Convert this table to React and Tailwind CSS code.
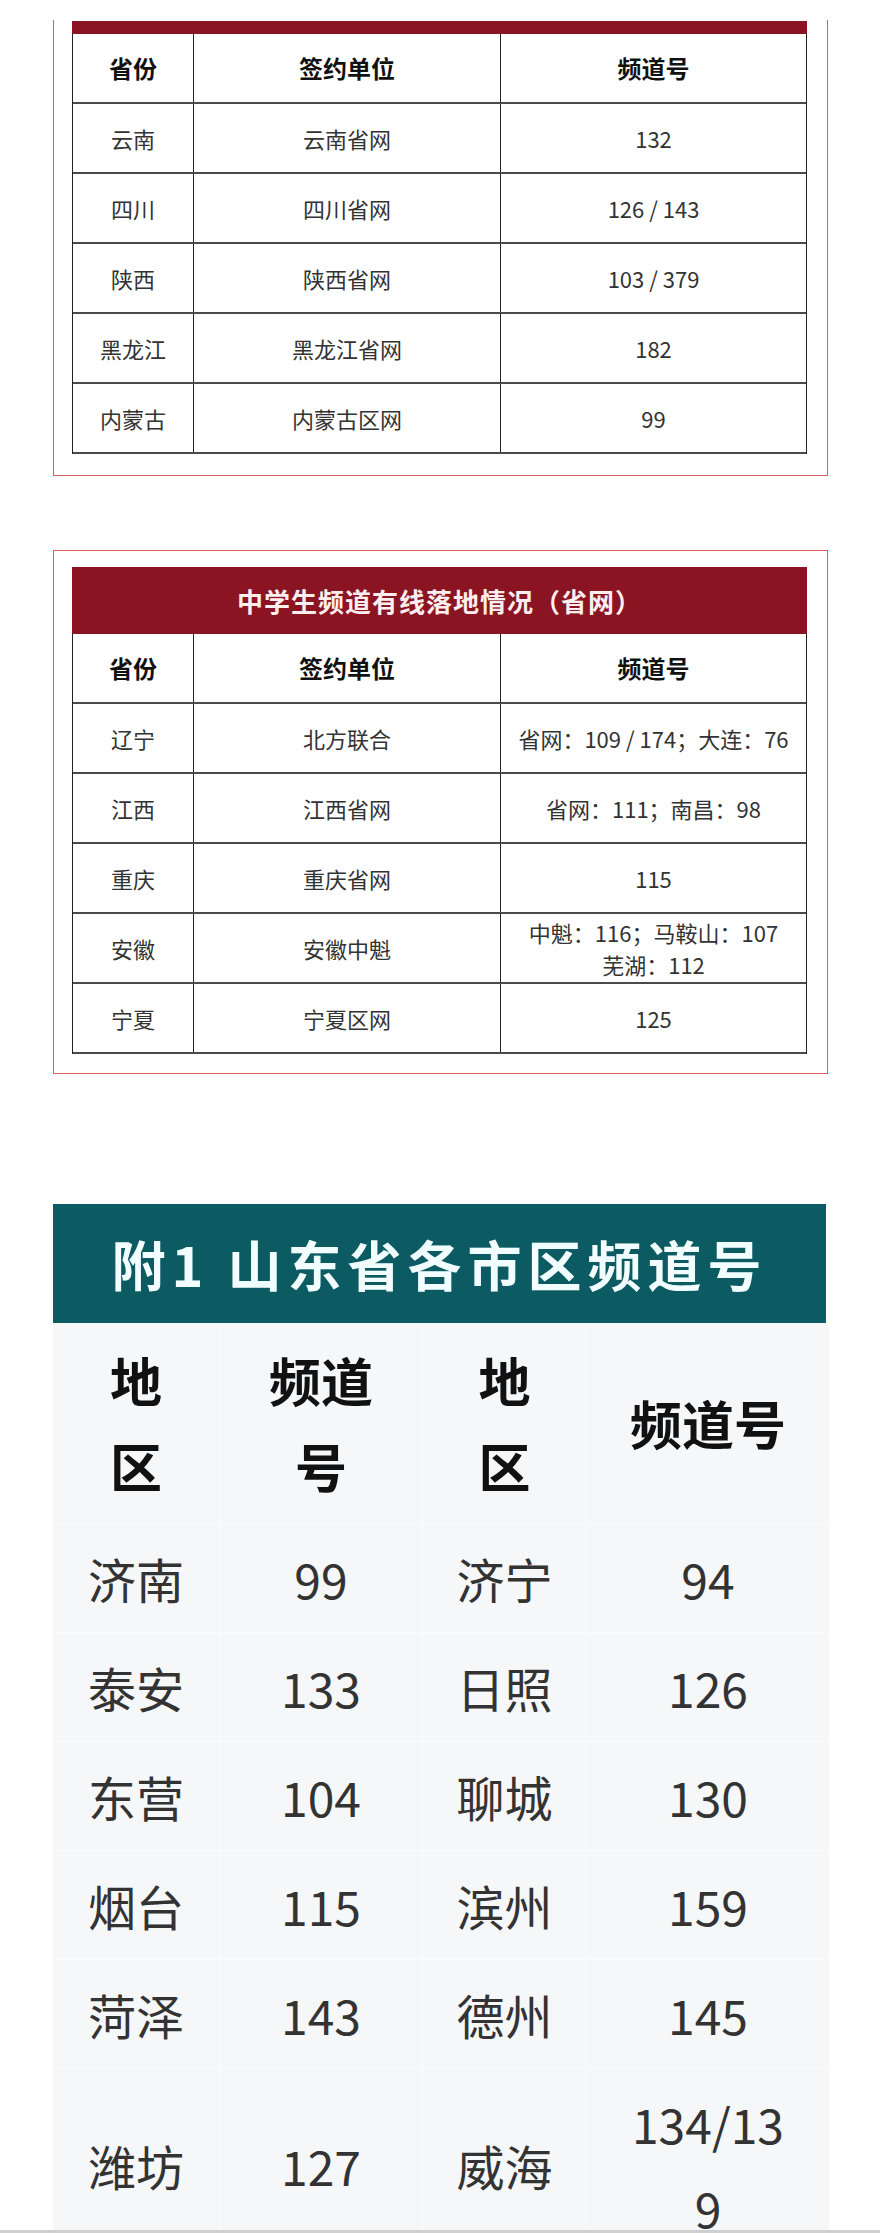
const provinces = [
  ["云南", "云南省网", "132"],
  ["四川", "四川省网", "126 / 143"],
  ["陕西", "陕西省网", "103 / 379"],
  ["黑龙江", "黑龙江省网", "182"],
  ["内蒙古", "内蒙古区网", "99"],
]

const middleSchool = [
  ["辽宁", "北方联合", ["省网：109 / 174；大连：76"]],
  ["江西", "江西省网", ["省网：111；南昌：98"]],
  ["重庆", "重庆省网", ["115"]],
  ["安徽", "安徽中魁", ["中魁：116；马鞍山：107", "芜湖：112"]],
  ["宁夏", "宁夏区网", ["125"]],
]

const shandong = [
  ["济南", "99", "济宁", "94"],
  ["泰安", "133", "日照", "126"],
  ["东营", "104", "聊城", "130"],
  ["烟台", "115", "滨州", "159"],
  ["菏泽", "143", "德州", "145"],
  ["潍坊", "127", "威海", "134/139"],
]

function Row({ cells, head }) {
  return (
    <div className="grid grid-cols-[121px_307px_1fr] h-[70px] border-b-2 border-[#4a4a4a]">
      {cells.map((c, i) => (
        <div
          key={i}
          className={`flex flex-col items-center justify-center text-center leading-[32px] ${i < 2 ? "border-r border-[#222]" : ""} ${head ? "text-[24px] font-bold text-[#111]" : "text-[22px] text-[#333]"}`}
        >
          {Array.isArray(c) ? c.map((l) => <span key={l}>{l}</span>) : c}
        </div>
      ))}
    </div>
  )
}

function ChannelTable({ rows }) {
  return (
    <div className="w-[735px] border-x border-[#222]">
      <Row head cells={["省份", "签约单位", "频道号"]} />
      {rows.map((r) => (
        <Row key={r[0]} cells={r} />
      ))}
    </div>
  )
}

function CityCell({ children, head, last }) {
  return (
    <div
      className={`flex items-center justify-center text-center break-all bg-[#f6f7f9] ${last ? "px-[36px]" : "px-[33px]"} ${head ? "py-[14px] text-[52px] leading-[86px] font-bold text-[#111]" : "py-[12px] text-[48px] leading-[84px] text-[#333]"}`}
    >
      {children}
    </div>
  )
}

export default function App() {
  return (
    <div className="relative h-[2233px] overflow-hidden bg-white font-['Noto_Sans_CJK_SC','Noto_Sans',sans-serif]">
      <div className="h-[20px]" />

      {/* 省网 table, top cut off */}
      <div className="ml-[53px] w-[775px] border-x-[1.5px] border-b-[1.5px] border-[#d8605e] pt-px pb-[21px] pl-[18px]">
        <div className="w-[735px] h-[13px] bg-[#8b1423]" />
        <ChannelTable rows={provinces} />
      </div>

      {/* 中学生频道 */}
      <div className="mt-[74px] ml-[53px] w-[775px] border-[1.5px] border-[#d8605e] pt-[16px] pb-[19px] pl-[18px]">
        <div className="w-[735px] h-[67px] bg-[#8b1423] flex items-center justify-center text-[26px] font-bold tracking-[1px] text-[#fdeef0]">
          中学生频道有线落地情况（省网）
        </div>
        <ChannelTable rows={middleSchool} />
      </div>

      {/* 附1 */}
      <div className="mt-[130px] ml-[53px] w-[773px]">
        <div className="h-[119px] bg-[#0c5b62] flex items-center justify-center text-[54px] font-bold tracking-[6px] text-[#f2fdff]">
          附1 山东省各市区频道号
        </div>
        <div className="grid grid-cols-[166px_202px_163px_242px] gap-px bg-[#fbfcfd]">
          <CityCell head>地区</CityCell>
          <CityCell head>频道号</CityCell>
          <CityCell head>地区</CityCell>
          <CityCell head last>频道号</CityCell>
          {shandong.map((r) =>
            r.map((c, i) => (
              <CityCell key={r[0] + i} last={i === 3}>
                {c}
              </CityCell>
            ))
          )}
        </div>
      </div>

      <div className="absolute bottom-0 left-0 right-0 h-[3px] bg-[#cfcfcf]" />
    </div>
  )
}
